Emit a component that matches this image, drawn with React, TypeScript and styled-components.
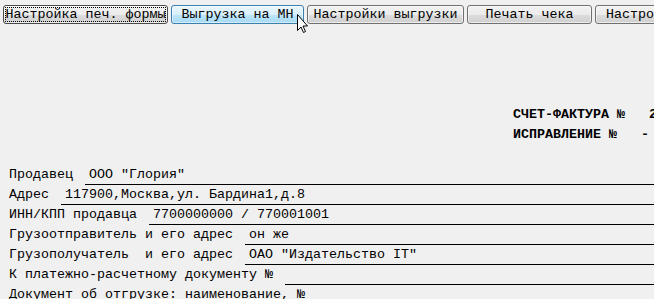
import React from "react";
import styled, { createGlobalStyle } from "styled-components";

const Global = createGlobalStyle`
  html, body { margin: 0; padding: 0; background: #f0f0f0; overflow: hidden; }
  body { width: 654px; height: 299px; font-family: "Liberation Mono", "Courier New", monospace; font-size: 13.333px; color: #000; }
`;

const Page = styled.div`
  position: relative;
  width: 654px;
  height: 299px;
  overflow: hidden;
`;

const Toolbar = styled.div`
  display: flex;
  flex-wrap: nowrap;
  gap: 3px;
  padding: 5px 0 0 3px;
`;

const Button = styled.button<{ $w: number; $hover?: boolean; $focus?: boolean }>`
  flex: 0 0 auto;
  box-sizing: border-box;
  width: ${(p) => p.$w}px;
  height: 19px;
  padding: 0;
  margin: 0;
  font-family: "Liberation Mono", "Courier New", monospace;
  font-size: 13.333px;
  letter-spacing: 0;
  line-height: 17px;
  color: #000;
  white-space: pre;
  text-align: center;
  border-radius: 3px;
  border: 1px solid ${(p) => (p.$hover ? "#3c7fb1" : p.$focus ? "#4a4a4a" : "#707070")};
  background: ${(p) =>
    p.$hover
      ? "linear-gradient(#eaf6fd 0%, #d9f0fc 50%, #bee6fd 51%, #a7d9f5 100%)"
      : "linear-gradient(#f2f2f2 0%, #ebebeb 50%, #dddddd 51%, #cfcfcf 100%)"};
  box-shadow: inset 0 0 0 1px ${(p) => (p.$hover ? "rgba(255,255,255,0.5)" : "rgba(255,255,255,0.6)")};
  outline: ${(p) => (p.$focus ? "1px dotted #000" : "none")};
  outline-offset: -3px;
  overflow: visible;
`;

const ButtonText = styled.span`
  display: block;
  margin: 0 -4px;
  text-align: center;
`;

const Title = styled.div`
  margin: 81px 0 0 513px;
  font-weight: bold;
  line-height: 20px;
  white-space: pre;
`;

const Form = styled.div`
  margin-top: 20px;
  padding-left: 9px;
  display: flex;
  flex-direction: column;
`;

const Row = styled.div`
  display: flex;
  height: 20px;
`;

const Label = styled.div`
  flex: 0 0 auto;
  white-space: pre;
  line-height: 19px;
  padding-right: 12px;
`;

const Value = styled.div`
  flex: 1 1 auto;
  min-width: 0;
  white-space: pre;
  line-height: 19px;
  padding-left: 4px;
  border-bottom: 1px solid #000;
`;

const Cursor = styled.svg`
  position: absolute;
  left: 296px;
  top: 13px;
`;

const rows: [string, string][] = [
  ["Продавец", 'ООО "Глория"'],
  ["Адрес", "117900,Москва,ул. Бардина1,д.8"],
  ["ИНН/КПП продавца", "7700000000 / 770001001"],
  ["Грузоотправитель и его адрес", "он же"],
  ["Грузополучатель  и его адрес", 'ОАО "Издательство IT"'],
  ["К платежно-расчетному документу №", ""],
  ["Документ об отгрузке: наименование, №", ""],
];

const buttons: { label: string; w: number; hover?: boolean; focus?: boolean }[] = [
  { label: "Настройка печ. формы", w: 165, focus: true },
  { label: "Выгрузка на МН", w: 133, hover: true },
  { label: "Настройки выгрузки", w: 157 },
  { label: "Печать чека", w: 125 },
  { label: "Настройки печати", w: 150 },
];

export default function App() {
  return (
    <Page>
      <Global />
      <Toolbar>
        {buttons.map((b) => (
          <Button key={b.label} $w={b.w} $hover={b.hover} $focus={b.focus}>
            <ButtonText>{b.label}</ButtonText>
          </Button>
        ))}
      </Toolbar>
      <Title>
        <div>{"СЧЕТ-ФАКТУРА №   2"}</div>
        <div>{"ИСПРАВЛЕНИЕ №   -"}</div>
      </Title>
      <Form>
        {rows.map(([l, v]) => (
          <Row key={l}>
            <Label>{l}</Label>
            <Value>{v}</Value>
          </Row>
        ))}
      </Form>
      <Cursor width="13" height="21" viewBox="0 0 13 21">
        <path
          d="M1.5 1.5 L1.5 17.5 L5 14 L7.5 19.5 L9.5 18.5 L7 13 L11.5 13 Z"
          fill="#fff"
          stroke="#000"
          strokeWidth="1"
          strokeLinejoin="miter"
        />
      </Cursor>
    </Page>
  );
}
